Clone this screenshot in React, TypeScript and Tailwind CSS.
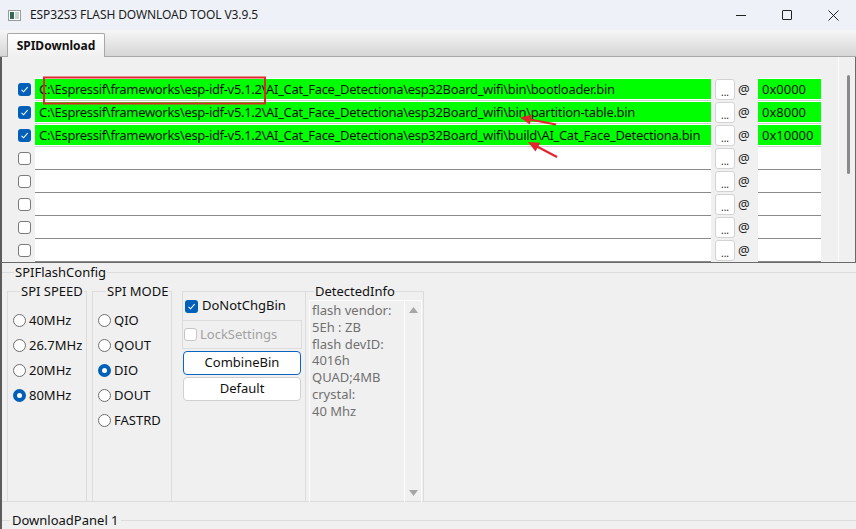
import React from "react";

const base = "C:\\Espressif\\frameworks\\esp-idf-v5.1.2\\AI_Cat_Face_Detectiona\\esp32Board_wifi\\";

const rows = [
  { on: true, path: base + "bin\\bootloader.bin", addr: "0x0000" },
  { on: true, path: base + "bin\\partition-table.bin", addr: "0x8000" },
  { on: true, path: base + "build\\AI_Cat_Face_Detectiona.bin", addr: "0x10000" },
  { on: false, path: "", addr: "" },
  { on: false, path: "", addr: "" },
  { on: false, path: "", addr: "" },
  { on: false, path: "", addr: "" },
  { on: false, path: "", addr: "" },
];

const info = ["flash vendor:", "5Eh : ZB", "flash devID:", "4016h", "QUAD;4MB", "crystal:", "40 Mhz"];

function Check({ on, disabled }: { on: boolean; disabled?: boolean }) {
  if (on) {
    return (
      <div className="w-[13px] h-[13px] rounded-[3px] bg-[#005fb8] flex items-center justify-center shrink-0">
        <svg width="9" height="9" viewBox="0 0 9 9">
          <path d="M1.5 4.8 L3.6 6.8 L7.6 2.2" fill="none" stroke="white" strokeWidth="1.1" />
        </svg>
      </div>
    );
  }
  return (
    <div
      className={
        "w-[13px] h-[13px] rounded-[3px] bg-white border shrink-0 " +
        (disabled ? "border-[#c5c5c5]" : "border-[#7a7a7a]")
      }
    />
  );
}

function Radio({ label, on }: { label: string; on?: boolean }) {
  return (
    <div className="h-[25px] flex items-center">
      {on ? (
        <div className="w-[13px] h-[13px] rounded-full bg-[#005fb8] flex items-center justify-center">
          <div className="w-[5px] h-[5px] rounded-full bg-white" />
        </div>
      ) : (
        <div className="w-[13px] h-[13px] rounded-full bg-white border border-[#6f6f6f]" />
      )}
      <span className="ml-[3px] text-[13px] text-[#111]">{label}</span>
    </div>
  );
}

export default function App() {
  return (
    <div className="w-[856px] h-[529px] bg-[#f0f0f0] relative overflow-hidden font-['Noto_Sans',sans-serif] text-black">
      {/* title bar */}
      <div className="h-[30px] bg-[#eef2f8] flex items-center">
        <div className="ml-[8px] w-[13px] h-[11px] border border-[#9a9a9a] bg-white flex p-[1px] gap-[1px]">
          <div className="w-[4px] bg-[#2f6b55]" />
          <div className="flex-1 bg-[#c8d4d0]" />
        </div>
        <span className="ml-[9px] text-[12px] text-[#1b1b1b] tracking-[-0.1px]">ESP32S3 FLASH DOWNLOAD TOOL V3.9.5</span>
        <div className="ml-auto flex items-center">
          <div className="w-[46px] h-[30px] flex items-center justify-center">
            <div className="w-[10px] h-[1px] bg-[#222]" />
          </div>
          <div className="w-[46px] h-[30px] flex items-center justify-center">
            <div className="w-[10px] h-[10px] border border-[#222] rounded-[1px]" />
          </div>
          <div className="w-[46px] h-[30px] flex items-center justify-center">
            <svg width="11" height="11" viewBox="0 0 11 11">
              <path d="M0.5 0.5 L10.5 10.5 M10.5 0.5 L0.5 10.5" stroke="#222" strokeWidth="1" />
            </svg>
          </div>
        </div>
      </div>

      {/* tab strip */}
      <div className="h-[27px] bg-gradient-to-b from-[#f6f6f6] to-[#d6d6d6] border-b border-[#a8a8a8] flex items-end pl-[7px]">
        <div className="h-[24px] w-[98px] border border-b-0 border-[#a8a8a8] rounded-t-[2px] bg-gradient-to-b from-white to-[#f0f0f0] flex items-center justify-center -mb-[1px]">
          <span className="text-[12px] font-bold text-[#111]">SPIDownload</span>
        </div>
      </div>

      {/* download list panel */}
      <div className="h-[206px] border-l-2 border-[#5c5c5c] border-b border-b-[#6a6a6a] flex overflow-hidden">
        <div className="w-[820px] pt-[21px]">
          {rows.map((r, i) => (
            <div key={i} className="h-[23px] flex items-start">
              <div className="w-[33px] h-[23px] flex items-center pl-[16px]">
                <Check on={r.on} />
              </div>
              <div className={"w-[676px] h-[23px] bg-white border-b " + (r.on ? "border-[#d0d0d0]" : "border-[#8a8a8a]")}>
                {r.on && (
                  <div className="mt-[1px] h-[20px] bg-[#00ff00] pl-[4px] text-[13px] leading-[20px] whitespace-nowrap tracking-[-0.32px] text-[#111]">
                    {r.path}
                  </div>
                )}
              </div>
              <div className="ml-[4px] mt-[1px] w-[20px] h-[21px] rounded-[3px] border border-[#d3d3d3] bg-white flex items-end justify-center pb-[3px]">
                <span className="text-[10px] leading-[8px] text-[#222]">...</span>
              </div>
              <div className="w-[23px] h-[23px] flex items-center pl-[3px] text-[13px] text-[#222]">@</div>
              <div className={"w-[63px] h-[23px] bg-white border-b " + (r.on ? "border-[#d0d0d0]" : "border-[#8a8a8a]")}>
                {r.on && (
                  <div className="mt-[1px] h-[20px] bg-[#00ff00] pl-[4px] text-[13px] leading-[20px] text-[#111]">{r.addr}</div>
                )}
              </div>
            </div>
          ))}
        </div>
        <div className="w-[16px]" />
        <div className="w-[18px] border-l border-[#fbfbfb] border-r border-r-[#6a6a6a] flex justify-center pt-[18px]">
          <div className="ml-[2px] w-[3px] h-[99px] rounded-full bg-[#8a8a8a]" />
        </div>
      </div>

      {/* config area */}
      <div className="border-l-2 border-[#5c5c5c] h-[266px] flex flex-col">
        <fieldset className="mt-[1px] border-t border-[#dcdcdc] pl-[5px]">
          <legend className="ml-[7px] px-[1px] text-[13px] leading-[17px] text-[#111]">SPIFlashConfig</legend>
          <div className="flex items-start mt-[2px]">
            <fieldset className="w-[80px] h-[218px] border border-b-0 border-[#dcdcdc] pl-[5px]">
              <legend className="ml-[7px] px-[1px] text-[13px] leading-[17px] text-[#111]">SPI SPEED</legend>
              <div className="pt-[8px]">
                <Radio label="40MHz" />
                <Radio label="26.7MHz" />
                <Radio label="20MHz" />
                <Radio label="80MHz" on />
              </div>
            </fieldset>
            <fieldset className="ml-[5px] w-[80px] h-[218px] border border-b-0 border-[#dcdcdc] pl-[5px]">
              <legend className="ml-[8px] px-[1px] text-[13px] leading-[17px] text-[#111]">SPI MODE</legend>
              <div className="pt-[8px]">
                <Radio label="QIO" />
                <Radio label="QOUT" />
                <Radio label="DIO" on />
                <Radio label="DOUT" />
                <Radio label="FASTRD" />
              </div>
            </fieldset>
            <div className="ml-[10px] w-[123px] mt-[8px] flex flex-col">
              <div className="h-[29px] border-t border-l border-[#dcdcdc] flex items-center pl-[2px]">
                <Check on />
                <span className="ml-[4px] text-[13px] text-[#111]">DoNotChgBin</span>
              </div>
              <div className="w-[120px] h-[29px] border border-[#dcdcdc] flex items-center pl-[1px]">
                <Check on={false} disabled />
                <span className="ml-[3px] text-[13px] text-[#a2a2a2]">LockSettings</span>
              </div>
              <div className="mt-[2px] ml-[1px] w-[118px] h-[24px] rounded-[4px] border-[1.5px] border-[#0a64c0] bg-white flex items-center justify-center text-[13px] text-[#111]">
                CombineBin
              </div>
              <div className="mt-[2px] ml-[1px] w-[118px] h-[24px] rounded-[4px] border border-[#d0d0d0] bg-white flex items-center justify-center text-[13px] text-[#111]">
                Default
              </div>
            </div>
            <fieldset className="w-[119px] h-[218px] border border-b-0 border-[#dcdcdc] pl-[3px]">
              <legend className="ml-[5px] px-[1px] text-[13px] leading-[17px] text-[#111]">DetectedInfo</legend>
              <div className="w-[113px] h-[202px] border border-b-0 border-[#fcfcfc] flex">
                <div className="w-[94px] pl-[2px] pt-[1px]">
                  {info.map((t) => (
                    <div key={t} className="text-[13px] leading-[16.8px] text-[#707070] whitespace-nowrap">{t}</div>
                  ))}
                </div>
                <div className="w-[17px] border-l border-[#fcfcfc] flex flex-col items-center justify-between py-[6px]">
                  <svg width="9" height="6" viewBox="0 0 9 6"><path d="M0 6 L4.5 0 L9 6 Z" fill="#a6a6a6" /></svg>
                  <svg width="9" height="6" viewBox="0 0 9 6"><path d="M0 0 L9 0 L4.5 6 Z" fill="#a6a6a6" /></svg>
                </div>
              </div>
            </fieldset>
          </div>
          <div className="-ml-[5px] border-t border-[#dcdcdc]" />
        </fieldset>
        <fieldset className="mt-[10px] border-t border-[#dcdcdc]">
          <legend className="ml-[8px] px-[2px] text-[13px] leading-[17px] text-[#111]">DownloadPanel 1</legend>
        </fieldset>
        <div className="ml-[2px] w-[74px] h-[2px] bg-[#0078d4]" />
      </div>

      {/* annotations drawn on the screenshot */}
      <svg className="absolute left-0 top-0 pointer-events-none" width="856" height="529">
        <rect x="44" y="77.5" width="221" height="26" fill="none" stroke="#e3262b" strokeWidth="2" />
        <line x1="556" y1="124.5" x2="530" y2="119.5" stroke="#e3262b" strokeWidth="2.2" />
        <polygon points="520,117.5 531.7,114.8 529.9,124.6" fill="#e3262b" />
        <line x1="557" y1="157" x2="537" y2="146.5" stroke="#e3262b" strokeWidth="2.2" />
        <polygon points="528,142 540.4,142.8 535.5,151.6" fill="#e3262b" />
      </svg>
    </div>
  );
}
